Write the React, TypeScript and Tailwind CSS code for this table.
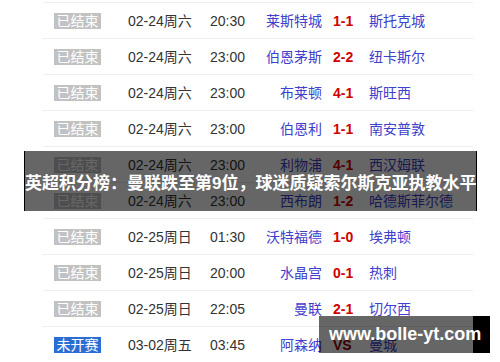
import React from 'react'

const matches = [
    { status: '已结束', date: '02-24周六', time: '20:30', home: '莱斯特城', score: '1-1', away: '斯托克城' },
    { status: '已结束', date: '02-24周六', time: '23:00', home: '伯恩茅斯', score: '2-2', away: '纽卡斯尔' },
    { status: '已结束', date: '02-24周六', time: '23:00', home: '布莱顿', score: '4-1', away: '斯旺西' },
    { status: '已结束', date: '02-24周六', time: '23:00', home: '伯恩利', score: '1-1', away: '南安普敦' },
    { status: '已结束', date: '02-24周六', time: '23:00', home: '利物浦', score: '4-1', away: '西汉姆联' },
    { status: '已结束', date: '02-24周六', time: '23:00', home: '西布朗', score: '1-2', away: '哈德斯菲尔德' },
    { status: '已结束', date: '02-25周日', time: '01:30', home: '沃特福德', score: '1-0', away: '埃弗顿' },
    { status: '已结束', date: '02-25周日', time: '20:00', home: '水晶宫', score: '0-1', away: '热刺' },
    { status: '已结束', date: '02-25周日', time: '22:05', home: '曼联', score: '2-1', away: '切尔西' },
    { status: '未开赛', date: '03-02周五', time: '03:45', home: '阿森纳', score: 'VS', away: '曼城' },
]

const font = { fontFamily: '"Liberation Sans", "Noto Sans CJK SC", sans-serif' }

export default function App() {
    return (
        <div className="relative w-[500px] h-[362px] overflow-hidden bg-white" style={font}>
            {/* Match list */}
            <div className="ml-[43px] w-[430px] pt-[2px]">
                <div className="border-t border-[#eeeeee]">
                    {matches.map((m, i) => {
                        const finished = m.status === '已结束'
                        return (
                            <div key={i} className="flex items-center h-[36px] border-b border-[#eeeeee] text-[14px] leading-none">
                                <div className="w-[85px] pl-[11px]">
                                    <span
                                        className={
                                            finished
                                                ? 'inline-block w-[47px] h-[16px] leading-[16px] text-center text-white bg-[#c2c2c2]'
                                                : 'inline-block w-[47px] h-[16px] leading-[16px] text-center text-white bg-[#2a6ed3]'
                                        }
                                    >
                                        {m.status}
                                    </span>
                                </div>
                                <div className="w-[82px] text-[#333333]">{m.date}</div>
                                <div className="w-[45px] text-[#333333]">{m.time}</div>
                                <div className="w-[67px] text-right text-[#4040cc]">{m.home}</div>
                                <div
                                    className={
                                        m.score === 'VS'
                                            ? 'w-[47px] pl-[11px] font-bold text-[#8b0000]'
                                            : 'w-[47px] pl-[11px] font-bold text-[#d00000]'
                                    }
                                >
                                    {m.score}
                                </div>
                                <div className="text-[#4040cc]">{m.away}</div>
                            </div>
                        )
                    })}
                </div>
            </div>

            {/* Headline banner */}
            <div className="absolute left-[24px] top-[151px] w-[453px] h-[60px] flex">
                <div className="flex-1 flex items-center justify-center bg-black/60 border-l border-black pt-[5px]">
                    <span className="text-white font-bold text-[17px] leading-none whitespace-nowrap">
                        英超积分榜：曼联跌至第9位，球迷质疑索尔斯克亚执教水平
                    </span>
                </div>
                <div className="w-[4px] bg-black" />
            </div>

            {/* Watermark */}
            <div className="absolute left-[319px] top-[316px] w-[171px] h-[37px] flex">
                <div className="w-[154px] bg-black/60" />
                <div className="w-[17px] bg-black" />
                <span className="absolute left-[10px] top-[9px] text-white font-bold text-[18px] leading-none whitespace-nowrap">
                    www.bolle-yt.com
                </span>
            </div>
        </div>
    )
}
